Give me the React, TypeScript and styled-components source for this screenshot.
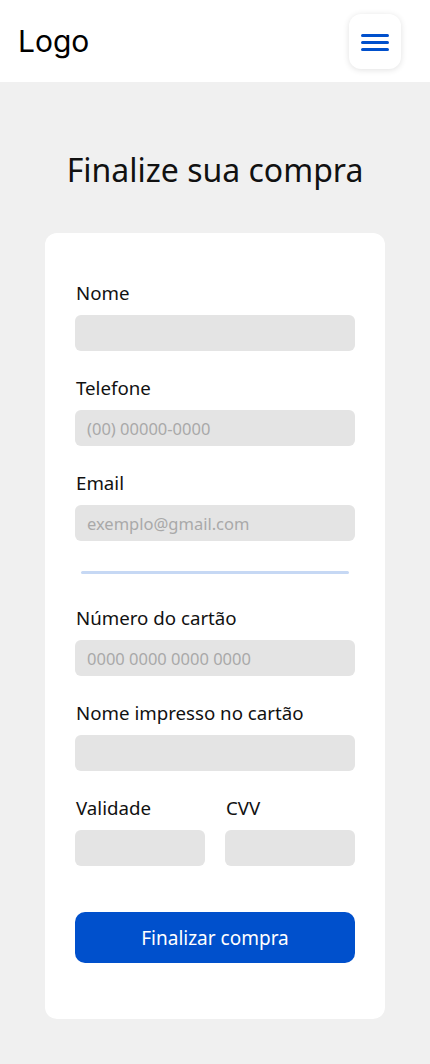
import React from 'react'
import styled, { createGlobalStyle } from 'styled-components'

const GlobalStyle = createGlobalStyle`
    body {
        margin: 0;
        background: #f0f0f0;
        font-family: 'Noto Sans', sans-serif;
        color: #111;
    }
`

type FieldProps = {
    label: string
    placeholder?: string
}

const Field = ({ label, placeholder }: FieldProps) => (
    <FieldWrap>
        <Label>{label}</Label>
        <Input placeholder={placeholder} />
    </FieldWrap>
)

export default function App() {
    return (
        <>
            <GlobalStyle />
            <Header>
                <Logo>Logo</Logo>
                <MenuButton aria-label="menu">
                    <svg width="30" height="22" viewBox="0 0 30 22">
                        <rect x="1" y="3" width="28" height="3" rx="1.5" fill="#0050cc" />
                        <rect x="1" y="10" width="28" height="3" rx="1.5" fill="#0050cc" />
                        <rect x="1" y="17" width="28" height="3" rx="1.5" fill="#0050cc" />
                    </svg>
                </MenuButton>
            </Header>

            <Main>
                <Title>Finalize sua compra</Title>
                <Card>
                    <Field label="Nome" />
                    <Field label="Telefone" placeholder="(00) 00000-0000" />
                    <Field label="Email" placeholder="exemplo@gmail.com" />
                    <Divider />
                    <Field label="Número do cartão" placeholder="0000 0000 0000 0000" />
                    <Field label="Nome impresso no cartão" />
                    <Row>
                        <Field label="Validade" />
                        <Field label="CVV" />
                    </Row>
                    <SubmitButton>Finalizar compra</SubmitButton>
                </Card>
            </Main>
        </>
    )
}

const Header = styled.header`
    display: flex;
    align-items: center;
    justify-content: space-between;
    height: 82px;
    padding: 0 29px 0 18px;
    background: #fff;
`

const Logo = styled.div`
    font-family: Inter, sans-serif;
    font-size: 30px;
    color: #000;
`

const MenuButton = styled.button`
    display: flex;
    align-items: center;
    justify-content: center;
    width: 52px;
    height: 55px;
    margin-top: 1px;
    border: none;
    border-radius: 12px;
    background: #fff;
    box-shadow: 0 1px 6px rgba(0, 0, 0, 0.12);
    cursor: pointer;
`

const Main = styled.main`
    display: flex;
    flex-direction: column;
    align-items: center;
    padding: 67px 0 45px;
`

const Title = styled.h1`
    margin: 0 0 42px;
    font-size: 32px;
    font-weight: 400;
    line-height: 42px;
    color: #111;
`

const Card = styled.div`
    display: flex;
    flex-direction: column;
    gap: 25px;
    width: 340px;
    box-sizing: border-box;
    padding: 48px 30px 56px;
    background: #fff;
    border-radius: 12px;
`

const FieldWrap = styled.div`
    display: flex;
    flex-direction: column;
    gap: 10px;
    flex: 1;
`

const Label = styled.label`
    padding-left: 1px;
    font-size: 18.7px;
    line-height: 24px;
    color: #111;
`

const Input = styled.input`
    height: 36px;
    box-sizing: border-box;
    width: 100%;
    padding: 0 12px;
    border: none;
    border-radius: 6px;
    background: #e4e4e4;
    font-family: 'Noto Sans', sans-serif;
    font-size: 16.5px;
    outline: none;

    &::placeholder {
        color: #a9a9a9;
    }
`

const Divider = styled.div`
    height: 3px;
    margin: 5px 6px 7px;
    border-radius: 2px;
    background: #c6d8f4;
`

const Row = styled.div`
    display: flex;
    gap: 20px;
`

const SubmitButton = styled.button`
    height: 51px;
    margin-top: 21px;
    border: none;
    border-radius: 10px;
    background: #0050cc;
    color: #fff;
    font-family: 'Noto Sans', sans-serif;
    font-size: 19px;
    cursor: pointer;
`
